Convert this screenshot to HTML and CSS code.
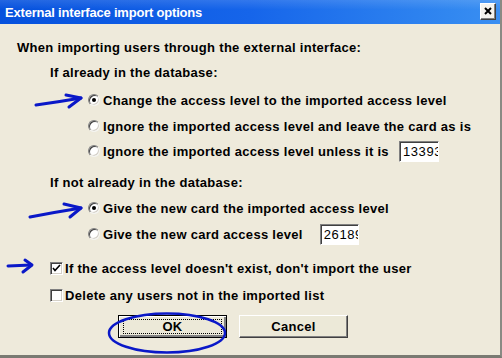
FILE: index.html
```html
<!DOCTYPE html>
<html>
<head>
<meta charset="utf-8">
<link rel="stylesheet" href="styles.css">
</head>
<body>
<div class="window">
  <div class="titlebar">
    <span class="title">External interface import options</span>
    <span class="close">
      <svg width="8" height="8" viewBox="0 0 8 8"><path d="M1 1 L7 7 M7 1 L1 7" stroke="#000" stroke-width="2"/></svg>
    </span>
  </div>
  <div class="content">
    <div class="row intro">When importing users through the external interface:</div>
    <div class="row heading g1">If already in the database:</div>
    <div class="row option g2"><span class="radio on"></span><span>Change the access level to the imported access level</span></div>
    <div class="row option g3"><span class="radio"></span><span>Ignore the imported access level and leave the card as is</span></div>
    <div class="row option g4"><span class="radio"></span><span>Ignore the imported access level unless it is</span><span class="field f1">13393</span></div>
    <div class="row heading g5">If not already in the database:</div>
    <div class="row option g6"><span class="radio on"></span><span>Give the new card the imported access level</span></div>
    <div class="row option g7"><span class="radio"></span><span>Give the new card access level</span><span class="field f2">26189</span></div>
    <div class="row check g8"><span class="box on"><svg width="9" height="9" viewBox="0 0 9 9"><path d="M1 4 L3 6.5 L8 1" stroke="#000" stroke-width="1.6" fill="none"/></svg></span><span>If the access level doesn't exist, don't import the user</span></div>
    <div class="row check g9"><span class="box"></span><span>Delete any users not in the imported list</span></div>
    <div class="buttons">
      <button class="btn default"><span class="focus">OK</span></button>
      <button class="btn">Cancel</button>
    </div>
  </div>
  <svg class="marks" width="502" height="358" viewBox="0 0 502 358">
    <g stroke="#0a18c8" stroke-width="3" fill="none" stroke-linecap="round" stroke-linejoin="round">
      <path d="M36 105 Q58 102 81 98"/>
      <path d="M66 95 L81 98 L69 107"/>
      <path d="M30 217 Q56 212 81 208"/>
      <path d="M64 204 L81 208 L70 217"/>
      <path d="M8 266 L31 265"/>
      <path d="M25 260 L32 265 L23 272"/>
      <ellipse cx="167" cy="333" rx="58" ry="19.5" stroke-width="2.5"/>
    </g>
  </svg>
</div>
</body>
</html>
```

FILE: styles.css
```css
* { box-sizing: border-box; }
html, body { margin: 0; padding: 0; }
body {
  width: 502px;
  height: 358px;
  overflow: hidden;
  font-family: "Liberation Sans", Arial, sans-serif;
}
.window {
  position: relative;
  width: 502px;
  height: 358px;
  background: #eeeadb;
  border-bottom: 3px solid #7a7a72;
  border-right: 2px solid #8a8a84;
}
.titlebar {
  height: 24px;
  display: flex;
  align-items: center;
  justify-content: space-between;
  padding: 0 4px 0 5px;
  background: linear-gradient(to bottom, rgba(255,255,255,0.12), rgba(255,255,255,0) 40%),
              linear-gradient(to right, #0551dd, #1665ea 50%, #3187f0 90%, #3a8ff2);
}
.title {
  color: #fff;
  font-weight: bold;
  font-size: 13px;
  letter-spacing: -0.2px;
}
.close {
  width: 16px;
  height: 17px;
  margin-top: -2px;
  display: flex;
  align-items: center;
  justify-content: center;
  background: #f4f3ee;
  border: 1px solid;
  border-color: #fff #404040 #404040 #fff;
  box-shadow: inset -1px -1px #808080;
}
.content {
  display: flex;
  flex-direction: column;
  padding-top: 13px;
  font-size: 13px;
  letter-spacing: 0.3px;
  font-weight: bold;
  color: #000;
}
.row {
  height: 20px;
  display: flex;
  align-items: center;
  white-space: nowrap;
}
.intro { padding-left: 17px; }
.heading { padding-left: 50px; }
.option { padding-left: 88px; }
.check { padding-left: 50px; }
.g1 { margin-top: 5px; }
.g2 { margin-top: 8px; }
.g3 { margin-top: 6px; }
.g4 { margin-top: 5px; }
.g5 { margin-top: 11px; }
.g6 { margin-top: 6px; }
.g7 { margin-top: 6px; }
.g8 { margin-top: 14px; }
.g9 { margin-top: 7px; }
.radio {
  width: 12px;
  height: 12px;
  margin-right: 3px;
  border-radius: 50%;
  background: #fff;
  border: 1px solid;
  border-color: #808080 #f4f4f0 #f4f4f0 #808080;
  box-shadow: inset 1px 1px #404040, inset -1px -1px #d4d0c8;
  display: flex;
  align-items: center;
  justify-content: center;
}
.radio.on::after {
  content: "";
  width: 4px;
  height: 4px;
  border-radius: 50%;
  background: #000;
}
.box {
  width: 13px;
  height: 13px;
  margin-right: 2px;
  background: #fff;
  border: 1px solid;
  border-color: #808080 #fff #fff #808080;
  box-shadow: inset 1px 1px #404040, inset -1px -1px #d4d0c8;
  display: flex;
  align-items: center;
  justify-content: center;
}
.field {
  height: 21px;
  overflow: hidden;
  background: #fff;
  border: 1px solid;
  border-color: #808080 #fff #fff #808080;
  box-shadow: inset 1px 1px #404040;
  font-size: 13px;
  font-weight: normal;
  line-height: 19px;
  padding-left: 3px;
  letter-spacing: 0.6px;
}
.f1 { width: 40px; margin-left: 10px; }
.f2 { width: 39px; margin-left: 17px; }
.buttons {
  display: flex;
  gap: 12px;
  margin-top: 10px;
  padding-left: 118px;
}
.btn {
  width: 109px;
  height: 23px;
  padding: 0;
  font-family: "Liberation Sans", Arial, sans-serif;
  font-size: 13px;
  letter-spacing: 0.3px;
  font-weight: bold;
  color: #000;
  background: #ece9d8;
  border: 1px solid;
  border-color: #fff #404040 #404040 #fff;
  box-shadow: inset -1px -1px #808080;
}
.btn.default {
  border: 1px solid #000;
  box-shadow: inset 1px 1px #fff, inset -2px -2px #808080;
  display: flex;
  align-items: center;
  justify-content: center;
}
.focus {
  width: 99px;
  height: 15px;
  line-height: 13px;
  border: 1px dotted #000;
  text-align: center;
}
.marks {
  position: absolute;
  left: 0;
  top: 0;
  pointer-events: none;
}
```
